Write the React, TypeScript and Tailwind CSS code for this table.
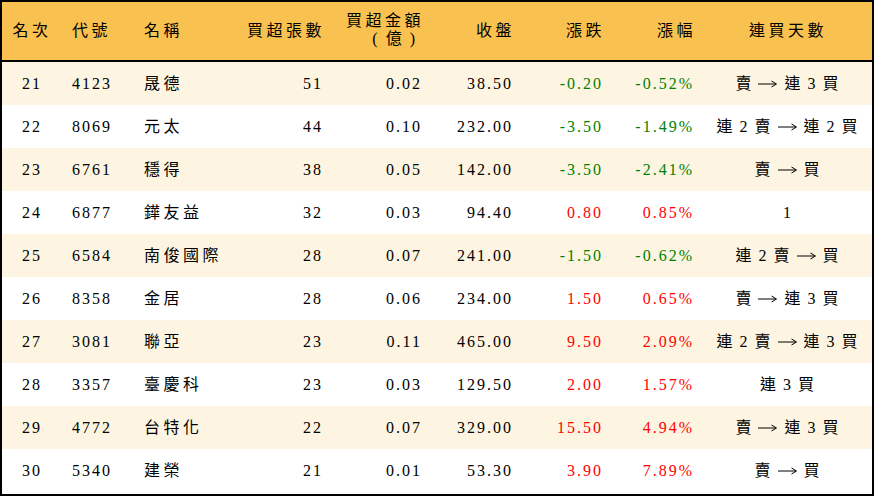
import React from "react";

type Row = {
  rank: string;
  code: string;
  name: string;
  vol: string;
  amt: string;
  close: string;
  chg: string;
  pct: string;
  days: string;
};

const rows: Row[] = [
  { rank: "21", code: "4123", name: "晟德", vol: "51", amt: "0.02", close: "38.50", chg: "-0.20", pct: "-0.52%", days: "賣 → 連 3 買" },
  { rank: "22", code: "8069", name: "元太", vol: "44", amt: "0.10", close: "232.00", chg: "-3.50", pct: "-1.49%", days: "連 2 賣 → 連 2 買" },
  { rank: "23", code: "6761", name: "穩得", vol: "38", amt: "0.05", close: "142.00", chg: "-3.50", pct: "-2.41%", days: "賣 → 買" },
  { rank: "24", code: "6877", name: "鏵友益", vol: "32", amt: "0.03", close: "94.40", chg: "0.80", pct: "0.85%", days: "1" },
  { rank: "25", code: "6584", name: "南俊國際", vol: "28", amt: "0.07", close: "241.00", chg: "-1.50", pct: "-0.62%", days: "連 2 賣 → 買" },
  { rank: "26", code: "8358", name: "金居", vol: "28", amt: "0.06", close: "234.00", chg: "1.50", pct: "0.65%", days: "賣 → 連 3 買" },
  { rank: "27", code: "3081", name: "聯亞", vol: "23", amt: "0.11", close: "465.00", chg: "9.50", pct: "2.09%", days: "連 2 賣 → 連 3 買" },
  { rank: "28", code: "3357", name: "臺慶科", vol: "23", amt: "0.03", close: "129.50", chg: "2.00", pct: "1.57%", days: "連 3 買" },
  { rank: "29", code: "4772", name: "台特化", vol: "22", amt: "0.07", close: "329.00", chg: "15.50", pct: "4.94%", days: "賣 → 連 3 買" },
  { rank: "30", code: "5340", name: "建榮", vol: "21", amt: "0.01", close: "53.30", chg: "3.90", pct: "7.89%", days: "賣 → 買" },
];

const grid = "grid grid-cols-[60px_68px_100px_100px_98px_90px_90px_90px_1fr]";

function Arrow() {
  return (
    <svg width="19" height="10" viewBox="0 0 19 10" className="block">
      <line x1="0" y1="5" x2="17.5" y2="5" stroke="black" strokeWidth="1" />
      <path d="M13.5 2 L18.5 5 L13.5 8" fill="none" stroke="black" strokeWidth="1" />
    </svg>
  );
}

function Days({ text }: { text: string }) {
  const tokens = text.split(" ");
  return (
    <div className="flex items-center justify-center gap-[7px] tracking-normal pl-[4px]">
      {tokens.map((t, i) => (t === "→" ? <Arrow key={i} /> : <span key={i}>{t}</span>))}
    </div>
  );
}

export default function App() {
  return (
    <div
      className="w-[874px] h-[496px] border-2 border-black bg-white text-[16px] tracking-[2px] text-black overflow-hidden"
      style={{ fontFamily: '"Liberation Serif", "Noto Sans CJK TC", serif' }}
    >
      <div className={`${grid} h-[60px] bg-[#f9c14f] border-b-2 border-black items-center tracking-[3.5px]`}>
        <div className="text-center">名次</div>
        <div className="pl-[10px]">代號</div>
        <div className="pl-[14px]">名稱</div>
        <div className="text-right pr-[5px]">買超張數</div>
        <div className="text-right pr-[4px] leading-[18px] -mt-[2px]">
          <div>買超金額</div>
          <div className="flex justify-end gap-[8px] tracking-normal pr-[9px]">
            <span>(</span>
            <span>億</span>
            <span>)</span>
          </div>
        </div>
        <div className="text-right pr-[3px]">收盤</div>
        <div className="text-right pr-[3px]">漲跌</div>
        <div className="text-right pr-[2px]">漲幅</div>
        <div className="text-center pl-[6px]">連買天數</div>
      </div>
      {rows.map((r, i) => {
        const up = !r.chg.startsWith("-");
        const color = up ? "text-[#ff0000]" : "text-[#008000]";
        return (
          <div
            key={r.rank}
            className={`${grid} h-[43px] items-center ${i % 2 === 0 ? "bg-[#fdf5e1]" : "bg-white"}`}
          >
            <div className="text-center">{r.rank}</div>
            <div className="pl-[10px]">{r.code}</div>
            <div className="pl-[14px] tracking-[3.5px]">{r.name}</div>
            <div className="text-right pr-[7px]">{r.vol}</div>
            <div className="text-right pr-[6px]">{r.amt}</div>
            <div className="text-right pr-[5px]">{r.close}</div>
            <div className={`text-right pr-[5px] ${color}`}>{r.chg}</div>
            <div className={`text-right pr-[4px] ${color}`}>{r.pct}</div>
            <div className="whitespace-nowrap">
              <Days text={r.days} />
            </div>
          </div>
        );
      })}
    </div>
  );
}
